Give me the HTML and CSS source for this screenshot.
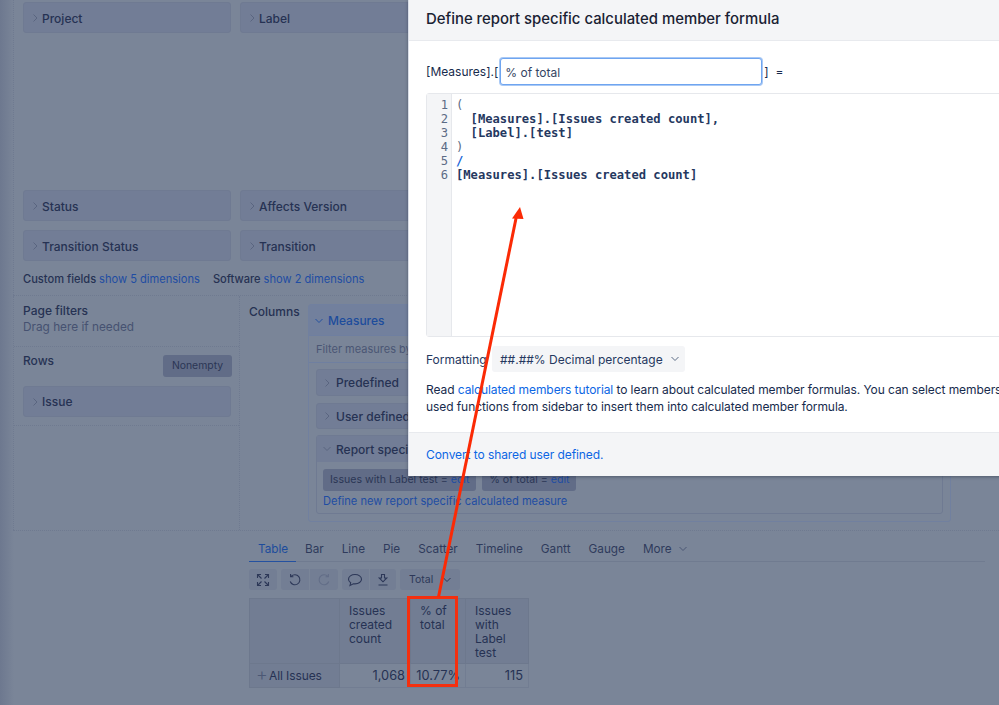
FILE: index.html
```html
<!DOCTYPE html>
<html lang="en">
<head>
<meta charset="utf-8">
<title>Define report specific calculated member formula</title>
<link rel="stylesheet" href="styles.css">
</head>
<body>
<svg class="defs" width="0" height="0" aria-hidden="true">
  <symbol id="right" viewBox="0 0 8 10"><path d="M2.5 1.5 6 5 2.5 8.5" fill="none" stroke="currentColor" stroke-width="1"/></symbol>
  <symbol id="down" viewBox="0 0 10 8"><path d="M1.5 2 5 5.5 8.5 2" fill="none" stroke="currentColor" stroke-width="1"/></symbol>
</svg>
<main class="page">
  <section class="dimensions">
    <div class="dim-row">
      <div class="card"><svg class="chev"><use href="#right"/></svg>Project</div>
      <div class="card"><svg class="chev"><use href="#right"/></svg>Label</div>
    </div>
    <div class="dim-row dim-row-gap">
      <div class="card"><svg class="chev"><use href="#right"/></svg>Status</div>
      <div class="card"><svg class="chev"><use href="#right"/></svg>Affects Version</div>
    </div>
    <div class="dim-row">
      <div class="card"><svg class="chev"><use href="#right"/></svg>Transition Status</div>
      <div class="card"><svg class="chev"><use href="#right"/></svg>Transition</div>
    </div>
    <p class="more-dims">Custom fields <a class="dim-link">show 5 dimensions</a><span class="software">Software <a class="dim-link">show 2 dimensions</a></span></p>
  </section>

  <section class="builder">
    <aside class="side">
      <div class="filters">
        <div class="side-title">Page filters</div>
        <div class="hint">Drag here if needed</div>
      </div>
      <div class="rows">
        <div class="rows-head"><span class="side-title">Rows</span><span class="nonempty">Nonempty</span></div>
        <div class="card card-wide"><svg class="chev"><use href="#right"/></svg>Issue</div>
      </div>
    </aside>
    <div class="columns">
      <span class="side-title columns-title">Columns</span>
      <div class="measures">
        <div class="measures-head"><svg class="chev chev-down chev-blue"><use href="#down"/></svg>Measures</div>
        <div class="measures-filter">Filter measures by</div>
        <div class="measures-body">
          <div class="group"><svg class="chev"><use href="#right"/></svg>Predefined</div>
          <div class="group group-user"><svg class="chev"><use href="#right"/></svg>User defined</div>
          <div class="report">
            <div class="report-head"><svg class="chev chev-down"><use href="#down"/></svg>Report specific</div>
            <div class="report-body">
              <div class="chips">
                <span class="chip">Issues with Label test = <a class="dim-link">edit</a></span>
                <span class="chip">% of total = <a class="dim-link">edit</a></span>
              </div>
              <a class="dim-link define">Define new report specific calculated measure</a>
            </div>
          </div>
        </div>
      </div>
    </div>
  </section>

  <section class="results">
    <nav class="tabs">
      <span class="tab tab-on">Table</span><span class="tab">Bar</span><span class="tab">Line</span><span class="tab">Pie</span><span class="tab">Scatter</span><span class="tab">Timeline</span><span class="tab">Gantt</span><span class="tab">Gauge</span><span class="tab">More<svg class="chev-more"><use href="#down"/></svg></span>
    </nav>
    <div class="toolbar">
      <span class="tool tool-first"><svg viewBox="0 0 14 14" class="ico"><path d="M1.5 1.5 5.5 5.5M12.5 1.5 8.5 5.5M1.5 12.5 5.5 8.5M12.5 12.5 8.5 8.5M1.5 5V1.5H5M9 1.5H12.5V5M1.5 9V12.5H5M9 12.5H12.5V9"/></svg></span>
      <span class="tool-group">
        <span class="tool"><svg viewBox="0 0 14 14" class="ico"><path d="M3.2 3.4A5 5 0 1 1 2.2 8.5M2.6 1V3.8H5.4"/></svg></span>
        <span class="tool tool-off"><svg viewBox="0 0 14 14" class="ico"><path d="M10.8 3.4A5 5 0 1 0 11.8 8.5M11.4 1V3.8H8.6"/></svg></span>
      </span>
      <span class="tool-group">
        <span class="tool tool-narrow"><svg viewBox="0 0 16 14" class="ico ico-wide"><path d="M8 1.5C4.4 1.5 1.5 3.5 1.5 6.2c0 1.5.9 2.7 2.2 3.6L3 12.4 6.4 10.8c.5.1 1 .1 1.6.1 3.6 0 6.5-2 6.5-4.7S11.6 1.5 8 1.5Z"/></svg></span>
        <span class="tool tool-narrow"><svg viewBox="0 0 14 14" class="ico"><path d="M5.5 1.5H8.5V5H10.8L7 8.8 3.2 5H5.5ZM2.5 12H11.5"/></svg></span>
      </span>
      <span class="total">Total<svg class="chev-total"><use href="#down"/></svg></span>
    </div>
    <table class="grid">
      <colgroup><col class="col-a"><col class="col-b"><col class="col-c"><col class="col-d"></colgroup>
      <thead>
        <tr><th></th><th>Issues created count</th><th>% of total</th><th>Issues with Label test</th></tr>
      </thead>
      <tbody>
        <tr><td class="row-name"><span class="plus">+</span>All Issues</td><td>1,068</td><td>10.77%</td><td>115</td></tr>
      </tbody>
    </table>
  </section>
</main>

<div class="modal">
  <header class="modal-head">Define report specific calculated member formula</header>
  <div class="modal-body">
    <div class="name-row">
      <span>[Measures].[</span>
      <input class="name-input" type="text" value="% of total" aria-label="Name">
      <span>]&nbsp; =</span>
    </div>
    <div class="editor">
      <div class="gutter">1<br>2<br>3<br>4<br>5<br>6</div>
<pre class="code"><span class="paren">(</span>
  [Measures].[Issues created count],
  [Label].[test]
<span class="paren">)</span>
<span class="op">/</span>
[Measures].[Issues created count]</pre>
    </div>
    <div class="format-row">
      <span>Formatting</span>
      <span class="format-btn">##.##% Decimal percentage<svg class="chev-format"><use href="#down"/></svg></span>
    </div>
    <p class="help">Read <a class="link">calculated members tutorial</a> to learn about calculated member formulas. You can select members or<br>used functions from sidebar to insert them into calculated member formula.</p>
  </div>
  <footer class="modal-foot"><a class="link">Convert to shared user defined.</a></footer>
</div>

<div class="red-box"></div>
<svg class="arrow" viewBox="0 0 999 705" aria-hidden="true">
  <path class="arrow-line" d="M438.5 597 516.5 216"/>
  <path class="arrow-head" d="M520 207 512 218.5 523.5 219Z"/>
</svg>
</body>
</html>
```
FILE: styles.css
```css
* { box-sizing: border-box; }
html, body { margin: 0; height: 705px; overflow: hidden; }
body {
  position: relative;
  width: 999px;
  font-family: Inter, "Noto Sans", sans-serif;
  font-size: 12px;
  color: #263253;
  background: linear-gradient(to right, #6d788f 0, #7a8598 14px);
}
.defs { position: absolute; }
a { text-decoration: none; }
.page { display: flex; flex-direction: column; height: 705px; padding-left: 13px; }

.dimensions { padding: 2px 0 0 9px; height: 295px; border-left: 1px dotted #6f7a90; }
.dim-row { display: flex; gap: 9px; margin-bottom: 9px; }
.dim-row-gap { margin-top: 157px; }
.card {
  display: flex; align-items: center;
  width: 208px; height: 31px;
  background: #727d96;
  border: 1px solid #6f7a92;
  border-radius: 3px;
  padding: 1px 0 0 7px;
  font-weight: 500;
}
.card-wide { padding-top: 0; }
.chev { width: 8px; height: 10px; margin-right: 3px; color: #5a6580; flex: none; }
.chev-down { width: 10px; height: 8px; margin-left: -1px; margin-right: 4px; }
.chev-blue { color: #2451a0; }
.more-dims { margin: 11px 0 0; font-size: 11.1px; font-weight: 500; line-height: 15px; }
.dim-link { color: #1f4da3; font-weight: 400; }
.software { margin-left: 13px; }

.builder { display: flex; height: 236px; border-bottom: 1px dotted #6f7a90; border-top: 1px dotted #6f7a90; }
.side { width: 227px; flex: none; border-left: 1px dotted #6f7a90; border-right: 1px dotted #6f7a90; }
.filters { height: 51px; padding: 7px 9px 0; border-bottom: 1px dotted #6f7a90; line-height: 16px; }
.side-title { font-weight: 500; line-height: 16px; }
.hint { color: #465271; font-size: 11.8px; }
.rows { padding: 6px 8px 8px 9px; border-bottom: 1px dotted #6f7a90; }
.rows-head { display: flex; justify-content: space-between; align-items: flex-start; height: 24px; margin-bottom: 9px; }
.nonempty {
  width: 69px; height: 22px; margin-top: 2px; margin-right: -1px;
  background: #616c87; border-radius: 3px;
  font-size: 10.4px; line-height: 22px; text-align: center; color: #2b3655;
}
.columns { flex: 1; display: flex; padding: 8px 0 0 9px; }
.columns-title { width: 59px; flex: none; }
.measures {
  width: 643px; height: 218px;
  background: #7a8598;
  border: 1px solid #71809f;
  border-radius: 3px;
}
.measures-head {
  display: flex; align-items: center; height: 31px; padding: 1px 0 0 6px;
  background: #72809d; color: #1d4c9c; font-weight: 500; border-bottom: 1px solid #6f7fa0;
}
.measures-filter { height: 27px; padding: 5px 7px; font-size: 11px; color: #4a5674; border-bottom: 1px solid #6f7fa0; line-height: 16px; }
.measures-body { padding: 6px 7px 0; }
.group {
  display: flex; align-items: center; height: 27px; margin-bottom: 7px; padding-left: 6px;
  background: #727d96; border: 1px solid #6f7a92; border-radius: 3px; font-weight: 500;
}
.group .chev { margin-right: 5px; }
.group-user { height: 26px; margin-bottom: 6px; }
.report { height: 79px; border: 1px solid #6f7a92; border-radius: 3px; }
.report-head { display: flex; align-items: center; height: 26px; padding-left: 6px; background: #727d96; font-weight: 500; }
.report-body { padding: 7px 6px 0; }
.chips { display: flex; gap: 6px; }
.chip { height: 22px; padding: 0 7px; background: #616c87; border-radius: 3px; font-size: 10.6px; line-height: 22px; color: #2b3655; }
.define { display: block; margin-top: 3px; font-size: 11.1px; line-height: 15px; }

.results { padding: 9px 0 0 236px; }
.tabs { display: flex; height: 22px; width: 736px; border-bottom: 1px solid #707b90; }
.tab { padding: 0 9px; height: 22px; line-height: 18px; color: #2f3b5c; font-size: 11.75px; white-space: nowrap; }
.tab-on { width: 47px; color: #1d4c9c; border-bottom: 1px solid #2451a0; }
.chev-more { width: 10px; height: 8px; margin-left: 6px; color: #4b5775; }
.toolbar { display: flex; gap: 4px; margin-top: 7px; height: 21px; }
.tool {
  display: flex; align-items: center; justify-content: center;
  width: 28px; height: 21px; background: #737e94; color: #2d3858;
}
.tool-first { border-radius: 3px; }
.tool-group { display: flex; gap: 1px; border-radius: 3px; overflow: hidden; }
.tool-off { color: #626d87; }
.tool-narrow { width: 26.5px; }
.ico { width: 14px; height: 14px; fill: none; stroke: currentColor; stroke-width: 1.1; }
.ico-wide { width: 16px; }
.total {
  display: flex; align-items: center; width: 60px; height: 21px; padding-left: 9px;
  background: #737e94; border-radius: 3px; font-size: 10.5px; color: #2d3858;
}
.chev-total { width: 10px; height: 8px; margin-left: 9px; color: #2d3858; }
.grid { table-layout: fixed; border-collapse: collapse; width: 279px; margin-top: 8px; font-size: 12px; color: #263253; }
.col-a { width: 90px; } .col-b { width: 71px; } .col-c { width: 55px; } .col-d { width: 63px; }
.grid th {
  height: 65px; padding: 5px 9px 2px; text-align: left; vertical-align: top;
  font-weight: 400; line-height: 14px; background: #727d93; border: 1px solid #6d788d;
}
.grid td { height: 24px; padding: 0 5px 0 0; text-align: right; line-height: 14px; font-size: 12.8px; border: 1px solid #727d92; background: #7a8598; }
.grid .row-name { padding: 0 0 0 6px; font-size: 12px; text-align: left; background: #727d93; white-space: nowrap; border-color: #6d788d; letter-spacing: -.1px; }
.plus { display: inline-block; width: 13px; color: #4c5875; font-size: 18px; font-weight: 300; line-height: 12px; vertical-align: -1px; }

.modal {
  position: absolute; left: 408px; top: 0;
  width: 700px; height: 476px;
  background: #fff; color: #172b4d;
  box-shadow: 0 1px 3px rgba(30, 40, 60, .45);
  border-left: 1px solid #d9dee8;
  display: flex; flex-direction: column;
  font-size: 12px;
}
.modal-head {
  height: 41px; padding-left: 17px;
  background: #f4f5f7; border-bottom: 1px solid #e8eaee;
  font-size: 14.9px; font-weight: 500; line-height: 38px; color: #1a2233;
}
.modal-body { flex: 1; padding: 17px 0 0 17px; }
.name-row { display: flex; align-items: center; gap: 2px; height: 27px; white-space: nowrap; }
.name-input {
  width: 262px; height: 27px; padding: 1px 4px 0;
  border: 1px solid #6fa5f0; box-shadow: 0 0 0 1px #a9c9f5; border-radius: 3px;
  font: 12px Inter, sans-serif; color: #344563; outline: none;
}
.editor {
  display: flex; height: 244px; margin-top: 8px; width: 640px;
  border: 1px solid #e6e8ec; border-radius: 3px;
  font-family: "DejaVu Sans Mono", monospace; line-height: 14px;
}
.gutter { width: 25px; height: 100%; padding: 4px 3px 0 0; background: #f4f5f7; color: #5b6b85; text-align: right; font-size: 12.15px; border-right: 1px solid #e6e8ec; }
.code { margin: 0; padding: 4px 0 0 4px; font: bold 12.15px/14px "DejaVu Sans Mono", monospace; color: #25385f; }
.paren { font-weight: 400; color: #5b6b85; }
.op { color: #1463d8; }
.format-row { display: flex; align-items: center; gap: 5px; margin-top: 9px; height: 26px; color: #25385f; }
.format-row > span:first-child { width: 61px; }
.format-btn {
  display: flex; align-items: center; width: 193px; height: 26px; padding-left: 8px;
  background: #f4f5f7; border-radius: 3px; color: #25385f; white-space: nowrap;
}
.chev-format { width: 10px; height: 8px; margin-left: 7px; color: #5b6b85; }
.help { margin: 9px 0 0; line-height: 17px; white-space: nowrap; color: #172b4d; letter-spacing: -.08px; }
.link { color: #0c66e4; }
.modal-foot { height: 44px; padding-left: 17px; background: #f4f5f7; border-top: 1px solid #e8eaee; line-height: 44px; letter-spacing: -.08px; }

.red-box { position: absolute; left: 407px; top: 596px; width: 51px; height: 91px; border: 3px solid #f4300f; }
.arrow { position: absolute; left: 0; top: 0; width: 999px; height: 705px; pointer-events: none; }
.arrow-line { stroke: #fb2a05; stroke-width: 3; fill: none; }
.arrow-head { fill: #fb2a05; }
```
